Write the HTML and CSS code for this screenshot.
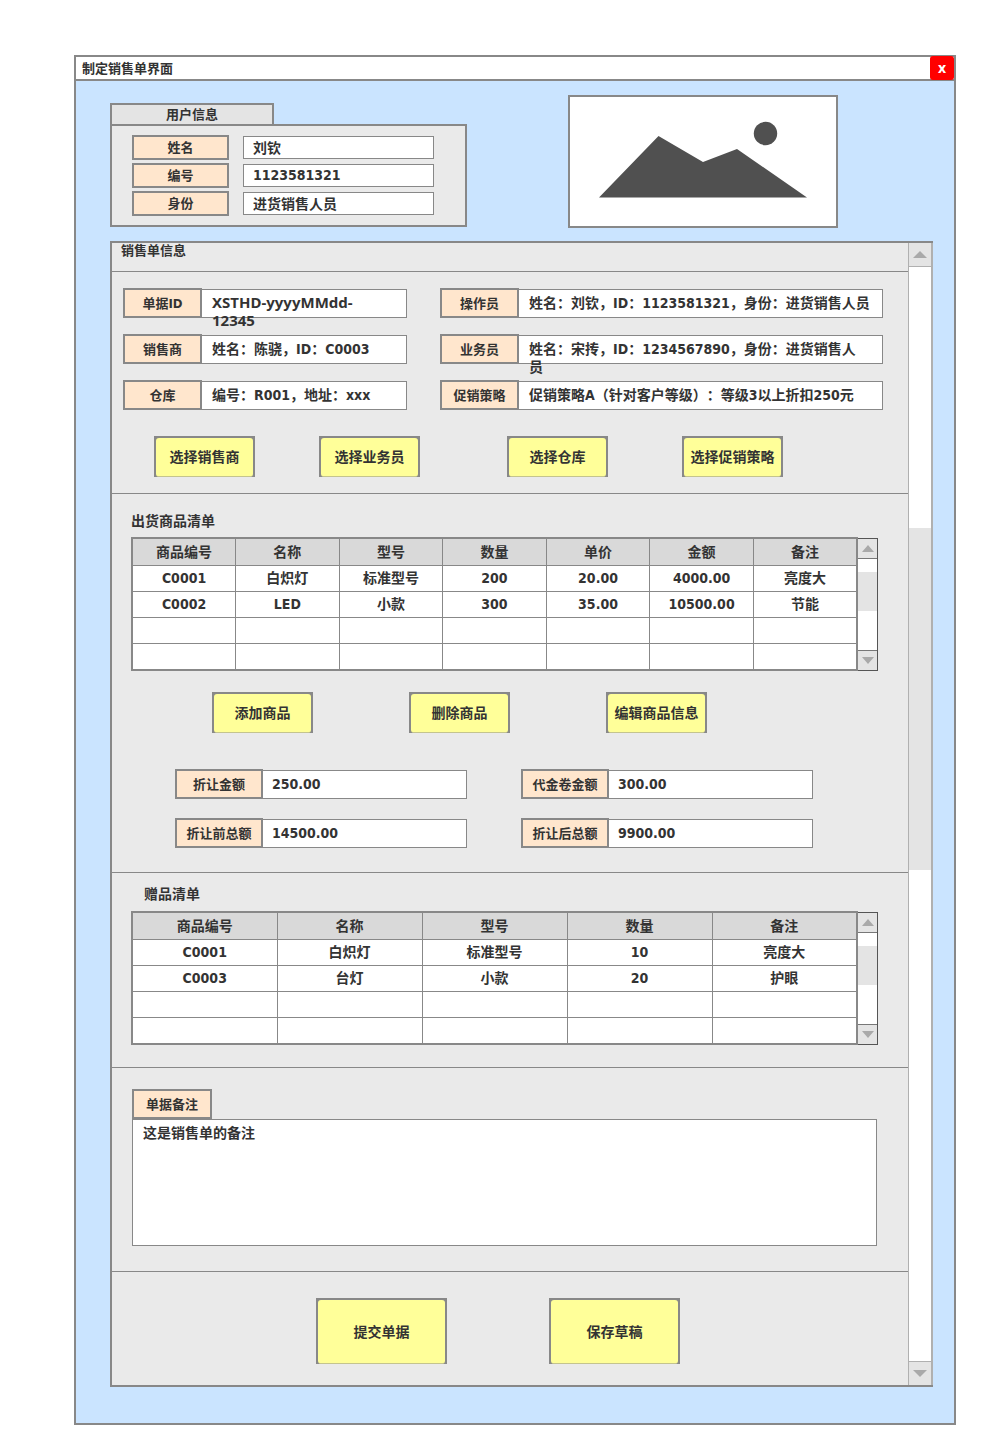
FILE: index.html
```html
<!DOCTYPE html>
<html lang="zh-CN">
<head>
<meta charset="utf-8">
<title>制定销售单界面</title>
<link rel="stylesheet" href="styles.css">
</head>
<body>
<main class="window">
  <header class="titlebar">
    <h1 class="title">制定销售单界面</h1>
    <button class="close" type="button" aria-label="关闭">x</button>
  </header>
  <div class="content">
    <div class="top">
      <section class="user">
        <h2 class="user-tab">用户信息</h2>
        <div class="user-card">
          <label class="label" for="u-name">姓名</label><input class="text" id="u-name" value="刘钦">
          <label class="label" for="u-id">编号</label><input class="text" id="u-id" value="1123581321">
          <label class="label" for="u-role">身份</label><input class="text" id="u-role" value="进货销售人员">
        </div>
      </section>
      <svg class="picture" viewBox="2 2 266 129" role="img" aria-label="图片">
        <path d="M31 102.500 90.500 41 135 67l34-13 70 48.500z"/>
        <circle cx="197.500" cy="38.500" r="11.700"/>
      </svg>
    </div>

    <div class="panel">
      <div class="sections">
        <section class="section section-title"><h2 class="caption">销售单信息</h2></section>

        <section class="section">
          <div class="info">
            <div class="field"><label class="label" for="f-id">单据ID</label><div class="box"><textarea class="area latin" id="f-id">XSTHD-yyyyMMdd-
12345</textarea></div></div>
            <div class="field"><label class="label" for="f-op">操作员</label><div class="box"><textarea class="area" id="f-op">姓名：刘钦，ID：1123581321，身份：进货销售人员</textarea></div></div>
            <div class="field"><label class="label" for="f-seller">销售商</label><div class="box"><textarea class="area" id="f-seller">姓名：陈骁，ID：C0003</textarea></div></div>
            <div class="field"><label class="label" for="f-clerk">业务员</label><div class="box"><textarea class="area" id="f-clerk">姓名：宋抟，ID：1234567890，身份：进货销售人
员</textarea></div></div>
            <div class="field"><label class="label" for="f-store">仓库</label><div class="box"><textarea class="area" id="f-store">编号：R001，地址：xxx</textarea></div></div>
            <div class="field"><label class="label" for="f-promo">促销策略</label><div class="box"><textarea class="area" id="f-promo">促销策略A（针对客户等级）：等级3以上折扣250元</textarea></div></div>
          </div>
          <div class="actions choose">
            <button class="btn" type="button"><span class="face">选择销售商</span></button>
            <button class="btn" type="button"><span class="face">选择业务员</span></button>
            <button class="btn" type="button"><span class="face">选择仓库</span></button>
            <button class="btn" type="button"><span class="face">选择促销策略</span></button>
          </div>
        </section>

        <section class="section">
          <h2 class="list-title">出货商品清单</h2>
          <div class="list">
            <table class="grid">
              <thead><tr><th>商品编号</th><th>名称</th><th>型号</th><th>数量</th><th>单价</th><th>金额</th><th>备注</th></tr></thead>
              <tbody>
                <tr><td>C0001</td><td>白炽灯</td><td>标准型号</td><td>200</td><td>20.00</td><td>4000.00</td><td>亮度大</td></tr>
                <tr><td>C0002</td><td>LED</td><td>小款</td><td>300</td><td>35.00</td><td>10500.00</td><td>节能</td></tr>
                <tr><td></td><td></td><td></td><td></td><td></td><td></td><td></td></tr>
                <tr><td></td><td></td><td></td><td></td><td></td><td></td><td></td></tr>
              </tbody>
            </table>
            <div class="scroll scroll-small">
              <button class="arrow" type="button" aria-label="向上"><svg viewBox="0 0 14 7"><path d="M1 7 7 0l6 7z"/></svg></button>
              <div class="track"><div class="thumb"></div></div>
              <button class="arrow" type="button" aria-label="向下"><svg viewBox="0 0 14 7"><path d="M1 0h12L7 7z"/></svg></button>
            </div>
          </div>
          <div class="actions edit">
            <button class="btn" type="button"><span class="face">添加商品</span></button>
            <button class="btn" type="button"><span class="face">删除商品</span></button>
            <button class="btn" type="button"><span class="face">编辑商品信息</span></button>
          </div>
          <div class="totals">
            <div class="field"><label class="label" for="t-cut">折让金额</label><input class="text" id="t-cut" value="250.00"></div>
            <div class="field"><label class="label" for="t-voucher">代金卷金额</label><input class="text" id="t-voucher" value="300.00"></div>
            <div class="field"><label class="label" for="t-before">折让前总额</label><input class="text" id="t-before" value="14500.00"></div>
            <div class="field"><label class="label" for="t-after">折让后总额</label><input class="text" id="t-after" value="9900.00"></div>
          </div>
        </section>

        <section class="section gifts">
          <h2 class="list-title">赠品清单</h2>
          <div class="list">
            <table class="grid">
              <thead><tr><th>商品编号</th><th>名称</th><th>型号</th><th>数量</th><th>备注</th></tr></thead>
              <tbody>
                <tr><td>C0001</td><td>白炽灯</td><td>标准型号</td><td>10</td><td>亮度大</td></tr>
                <tr><td>C0003</td><td>台灯</td><td>小款</td><td>20</td><td>护眼</td></tr>
                <tr><td></td><td></td><td></td><td></td><td></td></tr>
                <tr><td></td><td></td><td></td><td></td><td></td></tr>
              </tbody>
            </table>
            <div class="scroll scroll-small">
              <button class="arrow" type="button" aria-label="向上"><svg viewBox="0 0 14 7"><path d="M1 7 7 0l6 7z"/></svg></button>
              <div class="track"><div class="thumb"></div></div>
              <button class="arrow" type="button" aria-label="向下"><svg viewBox="0 0 14 7"><path d="M1 0h12L7 7z"/></svg></button>
            </div>
          </div>
        </section>

        <section class="section remark">
          <label class="label" for="remark">单据备注</label>
          <textarea class="remark-text" id="remark">这是销售单的备注</textarea>
        </section>

        <section class="section submit">
          <button class="btn btn-large" type="button"><span class="face">提交单据</span></button>
          <button class="btn btn-large" type="button"><span class="face">保存草稿</span></button>
        </section>
      </div>

      <div class="scroll scroll-main">
        <button class="arrow" type="button" aria-label="向上"><svg viewBox="0 0 14 7"><path d="M0 7 7 0l7 7z"/></svg></button>
        <div class="track"><div class="thumb"></div></div>
        <button class="arrow" type="button" aria-label="向下"><svg viewBox="0 0 14 7"><path d="M0 0h14L7 7z"/></svg></button>
      </div>
    </div>
  </div>
</main>
</body>
</html>
```
FILE: styles.css
```css
* {
  box-sizing: border-box;
}

body {
  margin: 0;
  padding: 55px 31px 29px 74px;
  background: #fff;
  color: #333;
  font: bold 14px/18px "DejaVu Sans Condensed", "Noto Sans CJK SC", sans-serif;
  text-spacing-trim: space-all;
}

h1,
h2 {
  margin: 0;
  font-size: 13px;
}

button,
input,
textarea {
  margin: 0;
  padding: 0;
  border: 0;
  border-radius: 0;
  color: inherit;
  font: inherit;
}

.window {
  border: 2px solid #888;
  background: #cae4ff;
}

.titlebar {
  display: flex;
  align-items: center;
  height: 24px;
  border-bottom: 2px solid #888;
  background: #fff;
}

.title {
  flex: 1;
  padding: 1px 0 0 6px;
}

.close {
  width: 24px;
  height: 24px;
  border-radius: 3px;
  background: #f00;
  color: #fff;
  font-family: "Noto Sans", sans-serif;
}

.content {
  padding: 14px 21px 36px 34px;
}

/* user card and picture */

.top {
  display: flex;
  gap: 101px;
}

.user {
  width: 357px;
  padding-top: 8px;
}

.user-tab {
  width: 164px;
  height: 21px;
  border: 2px solid #888;
  border-bottom: 0;
  background: #e4e4e4;
  line-height: 20px;
  text-align: center;
}

.user-card {
  display: grid;
  grid-template-columns: 97px 191px;
  align-items: center;
  gap: 3px 14px;
  padding: 9px 20px;
  border: 2px solid #888;
  background: #eaeaea;
}

.user-card .label {
  height: 25px;
}

.user-card .text {
  height: 23px;
}

.picture {
  width: 270px;
  height: 133px;
  border: 2px solid #888;
  background: #fff;
  fill: #505050;
}

/* labels and boxes */

.label {
  display: flex;
  align-items: center;
  justify-content: center;
  height: 30px;
  padding-top: 1px;
  border: 2px solid #888;
  background: #ffe6cd;
  font-size: 13px;
}

.text {
  min-width: 0;
  padding: 0 0 1px 9px;
  border: 1px solid #888;
  background: #fff;
}

.field {
  display: flex;
  align-items: center;
  min-width: 0;
}

.field .label {
  flex: none;
}

.field .text {
  flex: 1;
  height: 29px;
  border-left: 0;
}

.box {
  flex: 1;
  min-width: 0;
  height: 29px;
  border: 1px solid #888;
  border-left: 0;
  background: #fff;
}

.area {
  display: block;
  width: 100%;
  height: 42px;
  padding: 4px 0 0 10px;
  overflow: hidden;
  background: transparent;
  resize: none;
}

.area.latin {
  padding-top: 3px;
  font-family: "Noto Sans", "Noto Sans CJK SC", sans-serif;
  font-size: 15px;
}

/* main panel */

.panel {
  display: flex;
  margin-top: 13px;
  border: 2px solid #888;
  border-right: 0;
  background: #eaeaea;
}

.sections {
  flex: 1;
  min-width: 0;
}

.section {
  border-bottom: 1px solid #888;
}

.section:last-child {
  border-bottom: 0;
}

.section-title {
  height: 29px;
  padding-left: 9px;
}

.caption {
  line-height: 16px;
}

.info {
  display: grid;
  grid-template-columns: 284fr 443fr;
  gap: 16px 33px;
  padding: 16px 25px 0 11px;
}

.info .label {
  width: 79px;
}

.actions {
  display: grid;
}

.choose {
  grid-template-columns: 165fr 188fr 175fr 226fr;
  padding: 26px 0 16px 42px;
}

.edit {
  grid-template-columns: 197fr 197fr 302fr;
  padding: 21px 0 36px 100px;
}

.btn {
  display: grid;
  width: 101px;
  height: 41px;
  padding: 2px 2px 0;
  background: #888;
}

.face {
  display: grid;
  place-items: center;
  height: 100%;
  border-bottom: 1px solid #c4c48e;
  border-radius: 3px;
  background: #ff9;
}

.btn-large {
  width: 131px;
  height: 66px;
}

.list-title {
  padding: 18px 0 7px 19px;
  font-size: 14px;
}

.list {
  display: flex;
  padding: 0 30px 0 19px;
}

.grid {
  flex: 1;
  width: 100%;
  min-width: 0;
  height: 134px;
  table-layout: fixed;
  border: 2px solid #888;
  border-collapse: collapse;
  background: #fff;
}

.grid th,
.grid td {
  height: 26px;
  padding: 0;
  border: 1px solid #888;
  line-height: 18px;
  text-align: center;
}

.grid th {
  height: 27px;
  background: #d9d9d9;
}

.totals {
  display: grid;
  grid-template-columns: 1fr 1fr;
  gap: 19px 54px;
  padding: 0 95px 24px 63px;
}

.totals .label {
  width: 88px;
}

.gifts {
  padding-bottom: 22px;
}

.gifts .list-title {
  padding: 12px 0 8px 32px;
}

.remark {
  padding: 21px 31px 25px 20px;
}

.remark .label {
  width: 80px;
}

.remark-text {
  display: block;
  width: 100%;
  height: 127px;
  padding: 4px 10px;
  border: 1px solid #888;
  background: #fff;
  resize: none;
}

.submit {
  display: grid;
  grid-template-columns: 233fr 359fr;
  padding: 26px 0 21px 204px;
}

/* scroll bars */

.scroll {
  display: flex;
  flex: none;
  flex-direction: column;
}

.scroll-main {
  width: 25px;
  border: 1px solid #b0b0b0;
  border-width: 0 2px 0 1px;
}

.scroll-small {
  width: 20px;
  margin-top: 1px;
  border: 1px solid #555;
  border-left: 0;
}

.track {
  display: grid;
  flex: 1;
  grid-template-rows: 261fr 343fr 491fr;
  background: #fff;
}

.scroll-small .track {
  grid-template-rows: 13fr 40fr 39fr;
}

.thumb {
  grid-row: 2;
  background: #e4e4e4;
}

.arrow {
  display: grid;
  place-items: center;
  height: 24px;
  background: #e4e4e4;
}

.arrow:first-child {
  border-bottom: 1px solid #b0b0b0;
}

.arrow:last-child {
  border-top: 1px solid #b0b0b0;
}

.scroll-small .arrow {
  height: 20px;
  border-color: #777;
}

.arrow svg {
  width: 14px;
  height: 7px;
  fill: #a9a9a9;
}
```
